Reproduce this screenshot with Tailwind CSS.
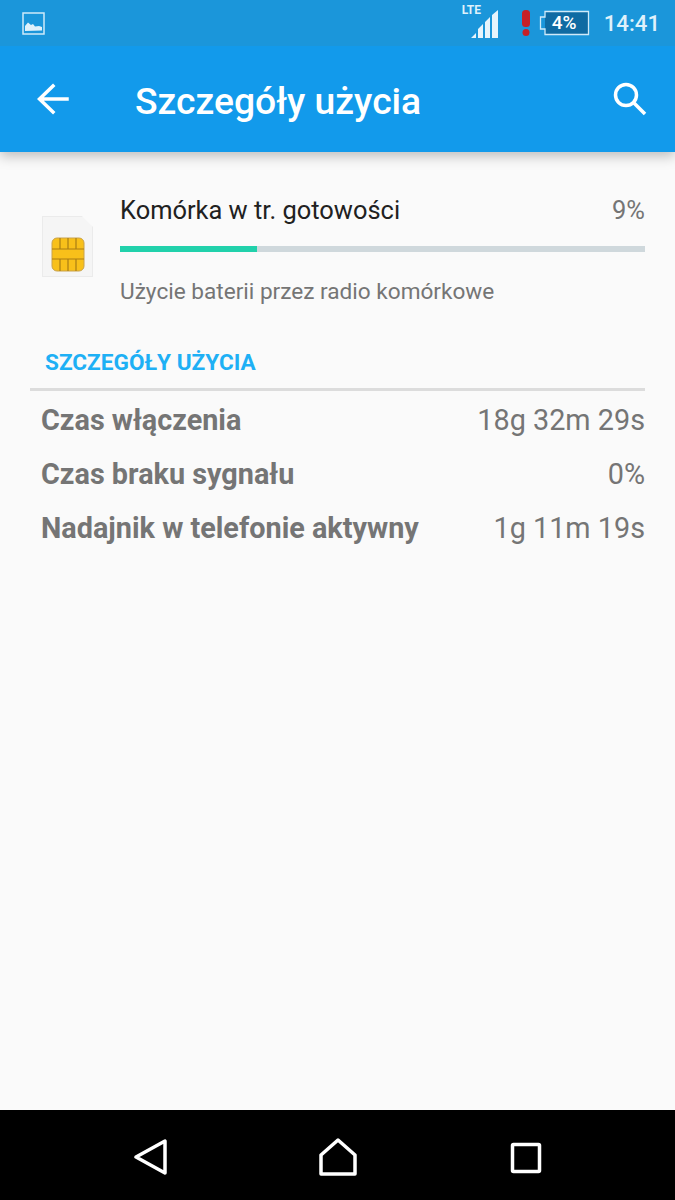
<!DOCTYPE html>
<html lang="pl">
<head>
    <meta charset="UTF-8">
    <meta name="viewport" content="width=device-width, initial-scale=1.0">
    <title>Szczegóły użycia</title>
    <script src="https://cdn.jsdelivr.net/npm/@tailwindcss/browser@4"></script>
</head>
<body>
    <div class="flex flex-col w-[675px] h-[1200px] overflow-hidden bg-[#fafafa] font-['Roboto',sans-serif]">

        <!-- status bar -->
        <div class="relative z-10 flex items-center h-[46px] shrink-0 bg-[#1b96da] pl-[22px] pr-[15px]">
            <svg width="23" height="23" viewBox="0 0 23 23" fill="none">
                <rect x="1" y="1" width="21" height="21" fill="#1b96da" stroke="#cfeaf9" stroke-width="1.5"/>
                <path d="M3 19v-5l3-3.500 3 2.500 2-1 2 2.500 4-.5 3 1v3.500z" fill="#dff1fb"/>
            </svg>
            <div class="relative ml-auto w-[40px] h-[46px]">
                <span class="absolute left-[2px] top-[3px] text-[12px] leading-[14px] font-bold text-[#dff1fb]">LTE</span>
                <svg class="absolute left-[10px] top-[10px]" width="30" height="29" viewBox="0 0 30 29" fill="#e6f4fc">
                    <path d="M1 28l5-5v5zM8 28v-9l5-5v14zM15 28V12l5-5v21zM22 28V5l6-5v28z"/>
                </svg>
            </div>
            <svg class="ml-[20px]" width="14" height="26" viewBox="0 0 14 26" fill="#c62026">
                <rect x="2" y="0" width="8" height="17" rx="3.500"/>
                <circle cx="6" cy="22.500" r="3.500"/>
            </svg>
            <svg class="ml-[5px]" width="51" height="26" viewBox="0 0 51 26">
                <path d="M6 7V1.500h43.500v23H6V19" fill="#0f6ba3"/>
                <path d="M6 7V1.500h43.500v23H6V19H1.500V7z" fill="none" stroke="#cfeaf9" stroke-width="1.300"/>
            </svg>
            <span class="relative ml-[-40px] w-[29px] text-[19px] leading-[24px] font-medium text-white text-center">4%</span>
            <span class="ml-[25px] text-[22.200px] leading-[26px] font-medium text-[#dff1fb]">14:41</span>
        </div>

        <!-- action bar -->
        <div class="relative flex items-center h-[106px] shrink-0 bg-[#129aeb] shadow-[0_4px_12px_rgba(0,0,0,0.25)]">
            <svg class="ml-[37px]" width="32" height="32" viewBox="0 0 32 32" fill="none" stroke="white" stroke-width="3.500" stroke-linecap="square">
                <path d="M30 16H4M16 3L2.500 16 16 29"/>
            </svg>
            <h1 class="ml-[66px] pt-[4px] text-[37.300px] leading-[44px] font-medium text-white">Szczegóły użycia</h1>
            <svg class="ml-auto mr-[28px]" width="34" height="34" viewBox="0 0 34 34" fill="none" stroke="white" stroke-width="3.500">
                <circle cx="13" cy="13" r="10.500"/>
                <path d="M21 21l11 11"/>
            </svg>
        </div>

        <!-- radio usage -->
        <div class="flex pl-[42px] pr-[30px] pt-[42px]">
            <div class="pt-[22px] shrink-0">
                <div class="relative w-[51px] h-[61px] bg-[#f5f5f5] border border-[#ebebeb] [clip-path:polygon(0_0,78%_0,100%_18%,100%_100%,0_100%)]">
                    <svg class="absolute left-[8px] top-[20px]" width="34" height="35" viewBox="0 0 34 35">
                        <rect x="1" y="1" width="32" height="33" rx="5" fill="#f8c01a" stroke="#c9a24a"/>
                        <path d="M9 1v11h16V1M17 1v11M1 22h32M9 22v12M17 22v12M25 22v12M1 12h8M25 12h8" fill="none" stroke="#a97d14" stroke-width="1.200"/>
                    </svg>
                </div>
            </div>
            <div class="flex-1 ml-[27px]">
                <div class="flex justify-between items-center h-[32px]">
                    <span class="text-[25.450px] leading-[32px] text-[#212121]">Komórka w tr. gotowości</span>
                    <span class="text-[25.450px] leading-[32px] text-[#757575]">9%</span>
                </div>
                <div class="mt-[20px] h-[6px] bg-[#cfd8dc]">
                    <div class="h-full w-[137px] bg-[#21d1ab]"></div>
                </div>
                <p class="mt-[26px] text-[22.600px] leading-[28px] text-[#757575]">Użycie baterii przez radio komórkowe</p>
            </div>
        </div>

        <!-- details -->
        <div class="px-[30px] mt-[43px]">
            <h2 class="pl-[15px] text-[22.600px] leading-[28px] font-bold text-[#1eb0f5]">SZCZEGÓŁY UŻYCIA</h2>
            <div class="mt-[11px] h-[3px] bg-[#dcdcdc]"></div>
            <div class="flex flex-col pl-[11px] pt-[2px] text-[28.800px] leading-[54px] text-[#757575]">
                <div class="flex justify-between"><span class="font-bold">Czas włączenia</span><span>18g 32m 29s</span></div>
                <div class="flex justify-between"><span class="font-bold">Czas braku sygnału</span><span>0%</span></div>
                <div class="flex justify-between"><span class="font-bold">Nadajnik w telefonie aktywny</span><span>1g 11m 19s</span></div>
            </div>
        </div>

        <!-- nav bar -->
        <div class="mt-auto flex items-center h-[90px] shrink-0 bg-black pl-[134px] pt-[4px]">
            <svg width="33" height="36" viewBox="0 0 33 36" fill="none" stroke="white" stroke-width="3.500" stroke-linejoin="round">
                <path d="M2 18L31 2v32z"/>
            </svg>
            <svg class="ml-[152px]" width="38" height="38" viewBox="0 0 38 38" fill="none" stroke="white" stroke-width="3.500" stroke-linejoin="round">
                <path d="M19 2L36 17v19H2V17z"/>
            </svg>
            <svg class="ml-[153px] translate-y-[1px]" width="32" height="32" viewBox="0 0 32 32" fill="none" stroke="white" stroke-width="3.500" stroke-linejoin="round">
                <rect x="2.500" y="2.500" width="27" height="27" rx="1"/>
            </svg>
        </div>
    </div>
</body>
</html>
